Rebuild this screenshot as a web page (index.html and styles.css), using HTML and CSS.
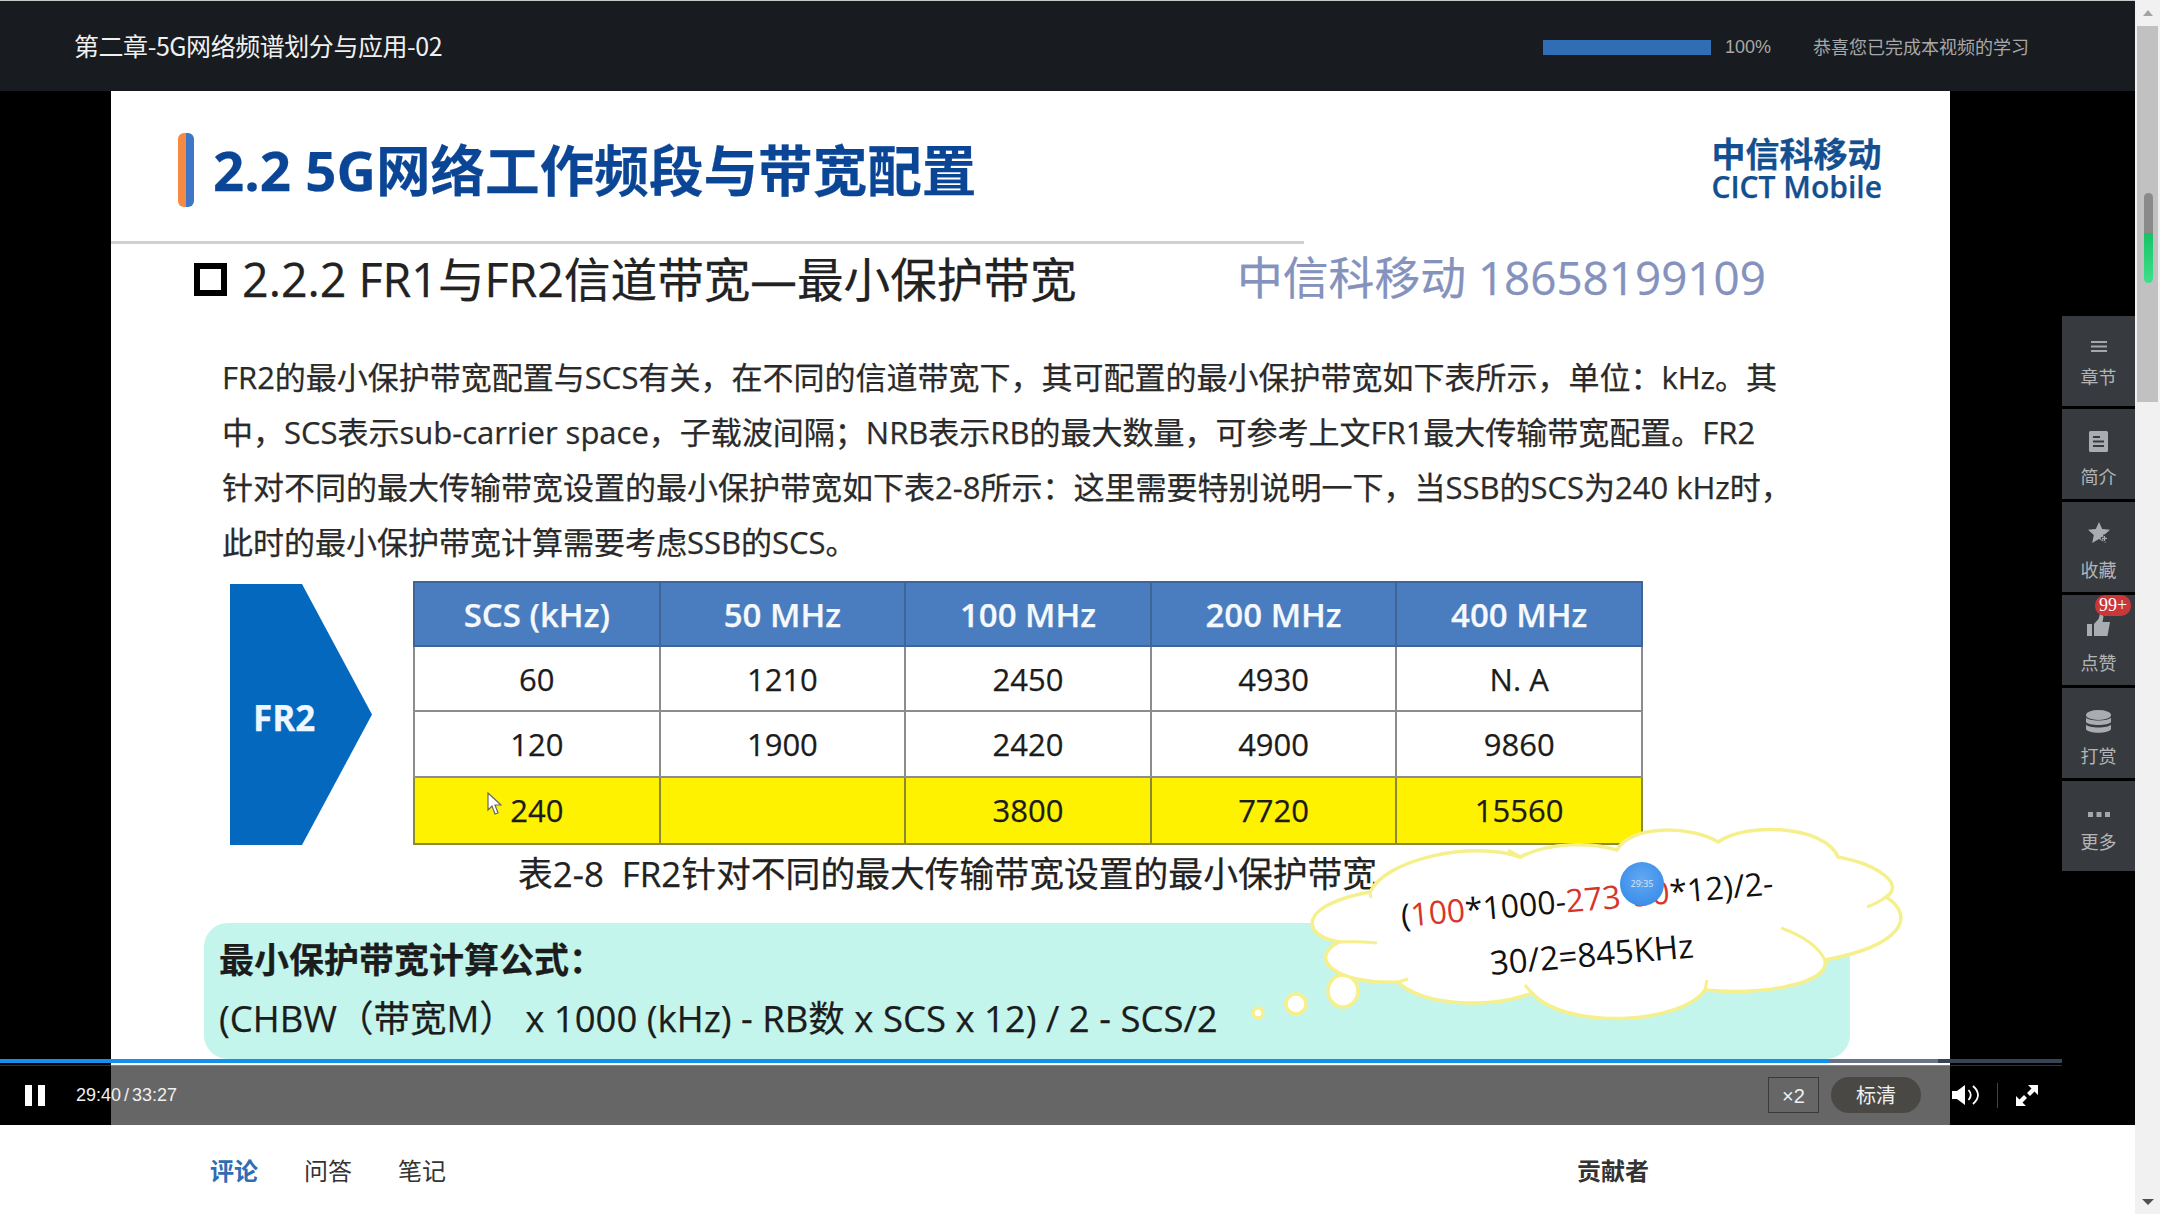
FILE: index.html
```html
<!DOCTYPE html>
<html lang="zh-CN">
<head>
    <meta charset="UTF-8">
    <title>第二章-5G网络频谱划分与应用-02</title>
    <link rel="stylesheet" href="styles.css">
</head>
<body>
    <div class="page">
        <div class="topbar">
            <div class="course-title">第二章-5G网络频谱划分与应用-02</div>
            <div class="study-bar"></div>
            <div class="study-percent">100%</div>
            <div class="study-note">恭喜您已完成本视频的学习</div>
        </div>

        <div class="player">
            <div class="stage">
                <div class="slide">
                    <div class="slide-head">
                        <div class="head-mark"></div>
                        <div class="head-title">2.2 5G网络工作频段与带宽配置</div>
                        <div class="logo">
                            <div class="logo-cn">中信科移动</div>
                            <div class="logo-en">CICT Mobile</div>
                        </div>
                    </div>
                    <div class="slide-rule"></div>

                    <div class="sub-head">
                        <div class="sub-box"></div>
                        <div class="sub-title">2.2.2 FR1与FR2信道带宽—最小保护带宽</div>
                        <div class="watermark">中信科移动 18658199109</div>
                    </div>

                    <div class="para">
                        <div>FR2的最小保护带宽配置与SCS有关，在不同的信道带宽下，其可配置的最小保护带宽如下表所示，单位：kHz。其</div>
                        <div>中，SCS表示sub-carrier space，子载波间隔；NRB表示RB的最大数量，可参考上文FR1最大传输带宽配置。FR2</div>
                        <div>针对不同的最大传输带宽设置的最小保护带宽如下表2-8所示：这里需要特别说明一下，当SSB的SCS为240 kHz时，</div>
                        <div>此时的最小保护带宽计算需要考虑SSB的SCS。</div>
                    </div>

                    <div class="figure">
                        <div class="fr-arrow">FR2</div>
                        <table class="band-table">
                            <tr class="row-head">
                                <th>SCS (kHz)</th><th>50 MHz</th><th>100 MHz</th><th>200 MHz</th><th>400 MHz</th>
                            </tr>
                            <tr><td>60</td><td>1210</td><td>2450</td><td>4930</td><td>N. A</td></tr>
                            <tr><td>120</td><td>1900</td><td>2420</td><td>4900</td><td>9860</td></tr>
                            <tr class="row-yellow"><td>240</td><td></td><td>3800</td><td>7720</td><td>15560</td></tr>
                        </table>
                    </div>

                    <div class="caption">表2-8&nbsp;&nbsp;FR2针对不同的最大传输带宽设置的最小保护带宽</div>

                    <div class="formula">
                        <div class="formula-title">最小保护带宽计算公式：</div>
                        <div class="formula-text">(CHBW（带宽M） x 1000 (kHz) - RB数 x SCS x 12) / 2 - SCS/2</div>
                    </div>

                    <!-- mouse pointer recorded in the video -->
                    <svg class="pointer" width="15" height="23" viewBox="0 0 15 23">
                        <path d="M1 1V18L5 14L8 22L11 21L8 13H14Z" fill="#fff" stroke="#666" stroke-width="1.2"/>
                    </svg>

                    <!-- thought cloud, viewBox uses page coordinates -->
                    <svg class="cloud" width="620" height="210" viewBox="1300 820 620 210">
                        <circle class="cloud-shape" cx="1258" cy="1013" r="5"/>
                        <circle class="cloud-shape" cx="1296" cy="1004" r="10"/>
                        <ellipse class="cloud-shape" cx="1343" cy="991" rx="15" ry="16"/>
                        <path class="cloud-shape" d="M1339 942C1300 935 1298 905 1370 892C1385 860 1470 840 1520 857C1550 842 1590 842 1617 850C1630 825 1690 825 1718 842C1745 822 1825 825 1838 857C1880 865 1905 885 1886 897C1915 915 1905 945 1825 960C1830 985 1760 995 1705 990C1680 1025 1565 1030 1532 993C1490 1010 1420 1005 1398 982C1340 985 1305 960 1339 942Z"/>
                        <path class="cloud-notch" d="M1339 942Q1358 941 1377 943M1370 892L1371 898M1508 850Q1516 854 1522 858M1867 907Q1878 903 1886 897M1781 928Q1815 940 1825 960M1705 990L1707 980M1532 993L1525 985M1398 982L1408 979"/>
                        <g transform="rotate(-5 1402 927)">
                            <text class="cloud-text" x="1402" y="927">(<tspan class="cloud-red">100</tspan>*1000-<tspan class="cloud-red">273</tspan>*<tspan class="cloud-red" dx="-5">30</tspan>*12)/2-</text>
                        </g>
                        <g transform="rotate(-5 1492 975)">
                            <text class="cloud-text cloud-text-big" x="1491" y="975">30/2=845KHz</text>
                        </g>
                    </svg>
                    <div class="time-bubble">29:35</div>
                </div>
            </div>

            <div class="side-menu">
                <div class="side-item side-item-short">
                    <svg width="16" height="11" viewBox="0 0 16 11"><path d="M0 0H16V2H0ZM0 4.5H16V6.5H0ZM0 9H16V11H0Z" fill="#a4a8ab"/></svg>
                    <span>章节</span>
                </div>
                <div class="side-item side-item-near">
                    <svg width="19" height="21" viewBox="0 0 19 21"><path d="M1.5 0H17.500A1.500 1.500 0 0 1 19 1.500V19.500A1.500 1.500 0 0 1 17.500 21H1.500A1.500 1.500 0 0 1 0 19.500V1.500A1.500 1.500 0 0 1 1.500 0ZM4 5V7H11V5ZM4 9.500V11.500H15V9.500ZM4 14V16H15V14Z" fill="#a9adb0" fill-rule="evenodd"/></svg>
                    <span>简介</span>
                </div>
                <div class="side-item">
                    <svg width="22" height="21" viewBox="0 0 22 21"><path d="M11 0L14.200 7L22 7.800L16.200 13L17.800 21L11 17L4.200 21L5.800 13L0 7.800L7.800 7Z" fill="#a9adb0"/><path d="M16.500 12.500V20M12.800 16.300H20.200" stroke="#373b40" stroke-width="2.500"/><path d="M16.500 14V19M14 16.300H19" stroke="#a9adb0" stroke-width="1.200"/></svg>
                    <span>收藏</span>
                </div>
                <div class="side-item">
                    <svg width="23" height="22" viewBox="0 0 23 22"><path d="M0 10H5V22H0ZM7 10L11.500 5L13 0H15.500L16.500 2.500L15.500 8H23L20.500 22H7Z" fill="#a9adb0"/></svg>
                    <span>点赞</span>
                    <div class="side-badge">99+</div>
                </div>
                <div class="side-item side-item-coins">
                    <svg width="25" height="24" viewBox="0 0 25 24"><ellipse cx="12.500" cy="5" rx="12.500" ry="5" fill="#a9adb0"/><path d="M0 7.500C2 11.500 23 11.500 25 7.500V12C23 16 2 16 0 12ZM0 14.500C2 18.500 23 18.500 25 14.500V19C23 24 2 24 0 19Z" fill="#a9adb0"/></svg>
                    <span>打赏</span>
                </div>
                <div class="side-item side-item-short">
                    <svg width="22" height="5" viewBox="0 0 22 5"><path d="M0 0H5V5H0ZM8.500 0H13.500V5H8.500ZM17 0H22V5H17Z" fill="#a4a8ab"/></svg>
                    <span>更多</span>
                </div>
            </div>

            <div class="controls">
                <div class="seek"><div class="seek-buffer"></div><div class="seek-played"></div></div>
                <div class="pause-btn"><i></i><i></i></div>
                <div class="play-time">29:40 / 33:27</div>
                <div class="speed-btn">×2</div>
                <div class="quality-btn">标清</div>
                <svg class="volume-icon" width="28" height="22" viewBox="0 0 28 22">
                    <path d="M0 7H5L13 1V21L5 15H0Z" fill="#fff"/>
                    <path d="M16.500 6Q21 11 16.500 16M21 2Q31 11 21 20" fill="none" stroke="#fff" stroke-width="1.800"/>
                </svg>
                <div class="control-split"></div>
                <svg class="full-icon" width="22" height="21" viewBox="0 0 22 21">
                    <path d="M12 0H22V10L18.500 6.500L14 11L11 8L15.500 3.500ZM0 21V11L3.500 14.500L8 10L11 13L6.500 17.500L10 21Z" fill="#fff"/>
                </svg>
            </div>
        </div>

        <div class="tabs-row">
            <div class="tabs">
                <div class="tab tab-active">评论</div>
                <div class="tab">问答</div>
                <div class="tab">笔记</div>
            </div>
            <div class="contrib-title">贡献者</div>
        </div>
    </div>

    <div class="rail">
        <div class="rail-up"></div>
        <div class="rail-thumb"></div>
        <div class="rail-down"></div>
        <div class="rail-pill"></div>
    </div>
</body>
</html>
```

FILE: styles.css
```css
html, body {
    margin: 0;
    height: 1214px;
    overflow: hidden;
}

body {
    display: flex;
    background-color: #fff;
    font-family: "Noto Sans CJK SC", "Liberation Sans", sans-serif;
}

.page {
    width: 2135px;
    flex-shrink: 0;
}

/* Top bar */
.topbar {
    height: 90px;
    border-top: 1px solid #c8c8c8;
    background-color: #181c20;
    display: flex;
    align-items: center;
    padding: 0 106px 0 74px;
    box-sizing: content-box;
    width: 1955px;
}

.course-title {
    margin-top: -2px;
    color: #f0f0f0;
    font-size: 25px;
    letter-spacing: -0.45px;
}

.study-bar {
    width: 168px;
    height: 15px;
    margin-top: 3px;
    margin-left: auto;
    background-color: #2f6db5;
}

.study-percent {
    margin-top: 3px;
    margin-left: 14px;
    color: #a8a8a8;
    font-size: 18px;
    font-family: "Liberation Sans", sans-serif;
}

.study-note {
    margin-left: 42px;
    color: #a8a8a8;
    font-size: 18px;
}

/* Player */
.player {
    position: relative;
    height: 1034px;
    background-color: #000;
}

.stage {
    width: 2061px;
    height: 100%;
    display: flex;
    justify-content: center;
}

.slide {
    position: relative;
    width: 1839px;
    height: 100%;
    overflow: hidden;
    background-color: #fff;
    font-family: "Open Sans", "Noto Sans CJK SC", sans-serif;
    color: #222;
    -webkit-text-stroke: 0.25px;
}

.slide-head {
    display: flex;
    align-items: flex-start;
    height: 108px;
    padding: 42px 68px 0 67px;
}

.head-mark {
    width: 16px;
    height: 74px;
    border-radius: 6px;
    background: linear-gradient(to right, #f58a42 0, #f58a42 50%, #3f76c8 50%, #3f76c8 100%);
}

.head-title {
    margin-left: 19px;
    color: #0b4596;
    font-size: 54.6px;
    font-weight: 700;
    line-height: 74px;
    white-space: nowrap;
}

.logo {
    margin-left: auto;
    margin-top: 3px;
    color: #14508f;
    white-space: nowrap;
}

.logo-cn {
    font-size: 34px;
    font-weight: 700;
    line-height: 37px;
}

.logo-en {
    font-size: 30px;
    font-weight: 600;
    line-height: 28px;
}

.slide-rule {
    width: 1193px;
    height: 3px;
    background-color: #d0d0d0;
}

.sub-head {
    display: flex;
    align-items: center;
    height: 70px;
    padding-left: 83px;
    white-space: nowrap;
}

.sub-box {
    width: 21px;
    height: 21px;
    border: 6px solid #000;
}

.sub-title {
    width: 995px;
    margin-top: -5px;
    margin-left: 15px;
    color: #222;
    font-size: 46.6px;
}

.watermark {
    margin-top: -8px;
    color: #8492bd;
    font-size: 45.8px;
}

.para {
    margin-top: 36px;
    padding-left: 111px;
    color: #2a2a2a;
    font-size: 31px;
    line-height: 55px;
    white-space: nowrap;
}

.figure {
    display: flex;
    margin-top: 11px;
    padding-left: 119px;
}

.fr-arrow {
    width: 142px;
    height: 261px;
    margin-top: 3px;
    margin-right: 41px;
    flex-shrink: 0;
    padding: 6px 0 0 23px;
    box-sizing: border-box;
    display: flex;
    align-items: center;
    background-color: #0468bf;
    clip-path: polygon(0 0, 72px 0, 100% 50%, 72px 100%, 0 100%);
    color: #eef6ff;
    font-size: 35px;
    font-weight: 700;
}

.band-table {
    width: 1230px;
    border-collapse: collapse;
    table-layout: fixed;
    font-size: 31px;
    text-align: center;
}

.band-table th,
.band-table td {
    height: 63px;
    padding: 0;
    border: 2px solid #8c8c8c;
    color: #1c1c1c;
    font-weight: 400;
}

.band-table .row-head th {
    height: 62px;
    background-color: #4a7dbf;
    border-color: #3f6596;
    color: #f5f8fc;
    font-size: 33px;
    font-weight: 600;
}

.band-table .row-yellow td {
    height: 65px;
    background-color: #fff200;
    border-color: #8c8a30;
}

.caption {
    padding-left: 407px;
    color: #222;
    font-size: 34.8px;
    line-height: 58px;
    white-space: nowrap;
}

.formula {
    width: 1646px;
    height: 136px;
    margin-top: 20px;
    margin-left: 93px;
    padding: 8px 0 0 15px;
    box-sizing: border-box;
    border-radius: 24px;
    background-color: #c3f5ec;
    color: #1c1c1c;
    white-space: nowrap;
}

.formula-title {
    font-size: 35px;
    font-weight: 700;
    line-height: 57px;
}

.formula-text {
    margin-top: 2px;
    font-size: 36.5px;
    line-height: 57px;
}

.pointer {
    position: absolute;
    left: 376px;
    top: 701px;
}

.cloud {
    position: absolute;
    left: 1189px;
    top: 729px;
    overflow: visible;
}

.cloud-shape {
    fill: #fff;
    stroke: #f6f08c;
    stroke-width: 3.5;
}

.cloud-notch {
    fill: none;
    stroke: #f6f08c;
    stroke-width: 3;
}

.cloud-text {
    fill: #111;
    font-size: 32px;
}

.cloud-text-big {
    font-size: 33px;
}

.cloud-red {
    fill: #d8352a;
}

.time-bubble {
    position: absolute;
    left: 1509px;
    top: 771px;
    width: 44px;
    height: 44px;
    border-radius: 50%;
    background: radial-gradient(circle at 50% 40%, #62a8f2, #2f86e6);
    color: #d8e8fa;
    font-size: 9px;
    line-height: 44px;
    text-align: center;
    -webkit-text-stroke: 0;
}

/* Side menu */
.side-menu {
    position: absolute;
    top: 225px;
    left: 2062px;
    display: flex;
    flex-direction: column;
    gap: 3px;
}

.side-item {
    position: relative;
    width: 73px;
    height: 90px;
    display: flex;
    flex-direction: column;
    align-items: center;
    justify-content: flex-end;
    padding-bottom: 10px;
    box-sizing: border-box;
    background-color: #373b40;
    color: #b4b4b4;
    font-size: 18px;
}

.side-item span {
    line-height: 26px;
    margin-top: 13px;
}

.side-item-short {
    padding-bottom: 17px;
}

.side-item-short span,
.side-item-near span {
    margin-top: 11px;
}

.side-item-coins span {
    margin-top: 8px;
}

.side-badge {
    position: absolute;
    top: 0;
    left: 33px;
    width: 36px;
    height: 21px;
    border-radius: 10px;
    background-color: #c9373b;
    color: #fff;
    font-family: "Liberation Serif", serif;
    font-size: 18px;
    line-height: 21px;
    text-align: center;
}

/* Controls */
.controls {
    position: absolute;
    left: 0;
    right: 0;
    bottom: 0;
    height: 60px;
    display: flex;
    align-items: center;
    background-color: rgba(0, 0, 0, 0.6);
    color: #f0f0f0;
}

.controls::before {
    content: "";
    position: absolute;
    top: 0;
    left: 0;
    width: 2062px;
    height: 1px;
    background-color: rgba(255, 255, 255, 0.2);
}

.seek {
    position: absolute;
    top: -6px;
    left: 0;
    width: 2062px;
    height: 4px;
    background-color: #3a4258;
}

.seek-buffer {
    position: absolute;
    left: 0;
    top: 0;
    width: 1938px;
    height: 100%;
    background-color: #6a7287;
}

.seek-played {
    position: absolute;
    left: 0;
    top: 0;
    width: 1829px;
    height: 100%;
    background-color: #1290f0;
}

.pause-btn {
    display: flex;
    gap: 6px;
    margin-left: 25px;
}

.pause-btn i {
    display: block;
    width: 7px;
    height: 21px;
    background-color: #fff;
}

.play-time {
    margin-left: 31px;
    font-family: "Liberation Sans", sans-serif;
    font-size: 18px;
    word-spacing: -2px;
    white-space: nowrap;
}

.speed-btn {
    width: 49px;
    height: 34px;
    margin-left: auto;
    border: 1px solid #3a3a3a;
    font-family: "Liberation Sans", sans-serif;
    font-size: 20px;
    line-height: 36px;
    text-align: center;
}

.quality-btn {
    width: 90px;
    height: 36px;
    margin-left: 12px;
    border-radius: 18px;
    background-color: #4a4845;
    font-size: 20px;
    line-height: 36px;
    text-align: center;
}

.volume-icon {
    margin-left: 31px;
}

.control-split {
    width: 1px;
    height: 25px;
    margin-left: 17px;
    background-color: #444;
}

.full-icon {
    margin-left: 18px;
    margin-right: 97px;
}

/* Tabs under the player */
.tabs-row {
    height: 89px;
    display: flex;
    align-items: center;
    justify-content: space-between;
    padding: 0 486px 0 210px;
}

.tabs {
    display: flex;
    gap: 46px;
}

.tab {
    color: #333;
    font-size: 24px;
}

.tab-active {
    color: #2f6db5;
    font-weight: 700;
}

.contrib-title {
    color: #333;
    font-size: 24px;
    font-weight: 700;
}

/* Browser scrollbar */
.rail {
    position: relative;
    flex: 1;
    background-color: #f1f1f1;
}

.rail-up {
    position: absolute;
    top: 10px;
    left: 8px;
    border-left: 5px solid transparent;
    border-right: 5px solid transparent;
    border-bottom: 6px solid #a3a3a3;
}

.rail-down {
    position: absolute;
    bottom: 9px;
    left: 7px;
    border-left: 6px solid transparent;
    border-right: 6px solid transparent;
    border-top: 6px solid #505050;
}

.rail-thumb {
    position: absolute;
    top: 26px;
    left: 2px;
    width: 21px;
    height: 376px;
    background-color: #c1c1c1;
}

.rail-pill {
    position: absolute;
    top: 193px;
    left: 9px;
    width: 9px;
    height: 90px;
    border-radius: 5px;
    background: linear-gradient(to bottom, #8a8a8a 0, #8a8a8a 44%, #17c266 44%, #3fe08a 100%);
}
```
